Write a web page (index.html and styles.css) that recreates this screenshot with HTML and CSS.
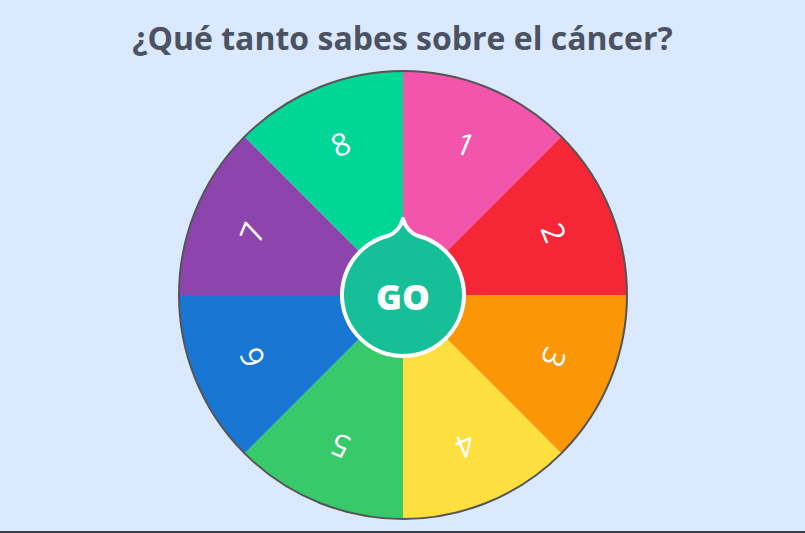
FILE: index.html
```html
<!DOCTYPE html>
<html lang="es">
<head>
<meta charset="utf-8">
<title>Ruleta</title>
<link rel="stylesheet" href="styles.css">
</head>
<body>
<main class="page">
  <h1 class="title">¿Qué tanto sabes sobre el cáncer?</h1>
  <div class="wheel-wrap">
    <svg class="wheel" width="452" height="452" viewBox="-226 -226 452 452">
      <g class="segments">
        <path d="M0 0 L0 -224 A224 224 0 0 1 158.39 -158.39 Z" fill="#f255ab"/>
        <path d="M0 0 L158.39 -158.39 A224 224 0 0 1 224 0 Z" fill="#f52635"/>
        <path d="M0 0 L224 0 A224 224 0 0 1 158.39 158.39 Z" fill="#fb9606"/>
        <path d="M0 0 L158.39 158.39 A224 224 0 0 1 0 224 Z" fill="#fddf3f"/>
        <path d="M0 0 L0 224 A224 224 0 0 1 -158.39 158.39 Z" fill="#38c96a"/>
        <path d="M0 0 L-158.39 158.39 A224 224 0 0 1 -224 0 Z" fill="#1976d2"/>
        <path d="M0 0 L-224 0 A224 224 0 0 1 -158.39 -158.39 Z" fill="#8e44ad"/>
        <path d="M0 0 L-158.39 -158.39 A224 224 0 0 1 0 -224 Z" fill="#00d696"/>
      </g>
      <circle class="rim" cx="0" cy="0" r="224"/>
      <g class="nums">
        <text transform="rotate(22.5) translate(0 -164)">1</text>
        <text transform="rotate(67.5) translate(0 -164)">2</text>
        <text transform="rotate(112.5) translate(0 -164)">3</text>
        <text transform="rotate(157.5) translate(0 -164)">4</text>
        <text transform="rotate(202.5) translate(0 -164)">5</text>
        <text transform="rotate(247.5) translate(0 -164)">6</text>
        <text transform="rotate(292.5) translate(0 -164)">7</text>
        <text transform="rotate(337.5) translate(0 -164)">8</text>
      </g>
      <path class="go-btn" d="M-14.8 -59.2 Q-4 -63 0 -76 Q4 -63 14.8 -59.2 A61 61 0 1 1 -14.8 -59.2 Z"/>
      <text class="go-text" x="0" y="1">GO</text>
    </svg>
  </div>
</main>
</body>
</html>
```

FILE: styles.css
```css
html, body {
  margin: 0;
  padding: 0;
}
body {
  background: #dbe9fe;
  font-family: "Open Sans", "Liberation Sans", sans-serif;
}
.page {
  box-sizing: border-box;
  height: 533px;
  border-bottom: 2px solid #3b3f46;
  display: flex;
  flex-direction: column;
  align-items: center;
  overflow: hidden;
}
.title {
  margin: 17px 0 0 0;
  font-size: 32px;
  line-height: 42px;
  font-weight: 700;
  color: #4b5362;
  letter-spacing: 0;
}
.wheel-wrap {
  margin-top: 10px;
  margin-left: 1px;
  display: flex;
  justify-content: center;
}
.wheel {
  display: block;
}
.rim {
  fill: none;
  stroke: #555555;
  stroke-width: 2;
}
.nums text {
  fill: #ffffff;
  font-family: "Open Sans", "Liberation Sans", sans-serif;
  font-size: 31px;
  font-weight: 500;
  text-anchor: middle;
  dominant-baseline: central;
}
.go-btn {
  fill: #17bf98;
  stroke: #ffffff;
  stroke-width: 4;
  stroke-linejoin: round;
}
.go-text {
  fill: #ffffff;
  font-family: "Open Sans", "Liberation Sans", sans-serif;
  font-size: 35px;
  font-weight: 800;
  text-anchor: middle;
  dominant-baseline: central;
}
```
